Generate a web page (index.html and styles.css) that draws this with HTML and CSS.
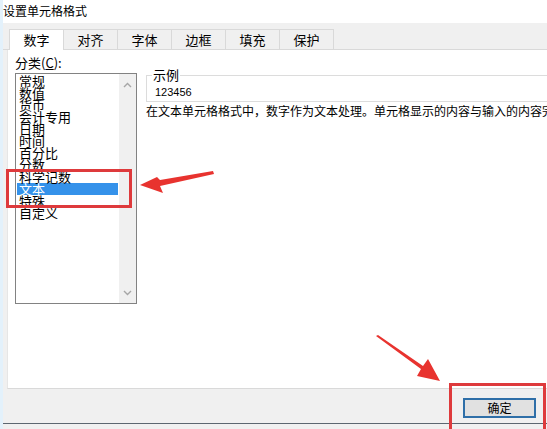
FILE: index.html
```html
<!DOCTYPE html>
<html>
<head>
    <title>设置单元格格式</title>
    <meta charset="utf-8">
    <link rel="stylesheet" href="styles.css">
</head>
<body>
    <div class="window">
        <div class="titlebar">设置单元格格式</div>

        <!-- tab strip -->
        <div class="tabstrip">
            <div class="tab active">数字</div>
            <div class="tab">对齐</div>
            <div class="tab">字体</div>
            <div class="tab">边框</div>
            <div class="tab">填充</div>
            <div class="tab">保护</div>
        </div>

        <div class="panel">
            <div class="category">
                <div class="category-label">分类(<u>C</u>):</div>
                <div class="listbox">
                    <ul class="items">
                        <li>常规</li>
                        <li>数值</li>
                        <li>货币</li>
                        <li>会计专用</li>
                        <li>日期</li>
                        <li>时间</li>
                        <li>百分比</li>
                        <li>分数</li>
                        <li>科学记数</li>
                        <li class="selected">文本</li>
                        <li>特殊</li>
                        <li>自定义</li>
                    </ul>
                    <div class="scrollbar">
                        <svg width="9" height="6" viewBox="0 0 9 6"><path d="M1 5 L4.5 1.5 L8 5" fill="none" stroke="#a6a6a6" stroke-width="1.4"/></svg>
                        <svg width="9" height="6" viewBox="0 0 9 6"><path d="M1 1 L4.5 4.5 L8 1" fill="none" stroke="#a6a6a6" stroke-width="1.4"/></svg>
                    </div>
                </div>
            </div>

            <div class="detail">
                <fieldset class="sample">
                    <legend>示例</legend>
                    <div class="sample-value">123456</div>
                </fieldset>
                <p class="note">在文本单元格格式中，数字作为文本处理。单元格显示的内容与输入的内容完全一致。</p>
            </div>
        </div>

        <div class="footer">
            <button class="ok">确定</button>
        </div>
        <div class="taskline"></div>
    </div>

    <!-- red annotation marks -->
    <div class="mark mark-list"></div>
    <div class="mark mark-ok"></div>
    <svg class="arrows" width="547" height="429" viewBox="0 0 547 429">
        <polygon points="213,171 214,174 160,186 163,193 140,185 157,177 160,180" fill="#e8332f"/>
        <polygon points="376,336 378,335 423,366 428,359 440,381 417,376 421,369" fill="#e8332f"/>
    </svg>
</body>
</html>
```

FILE: styles.css
```css
body {
    margin: 0;
    width: 547px;
    height: 429px;
    overflow: hidden;
    position: relative;
    background-color: #ffffff;
    font-family: "Noto Sans CJK SC", "Liberation Sans", sans-serif;
    color: #000000;
}

/* dialog frame */
.window {
    height: 429px;
    border-left: 3px solid #e3f1fb;
    display: flex;
    flex-direction: column;
    background-color: #f0f0f0;
}

.titlebar {
    height: 23px;
    background-color: #ffffff;
    font-size: 12px;
    line-height: 22px;
    flex-shrink: 0;
}

/* tab strip */
.tabstrip {
    height: 26px;
    display: flex;
    align-items: flex-end;
    padding-left: 6px;
    border-bottom: 1px solid #d9d9d9;
    flex-shrink: 0;
}

.tab {
    width: 53px;
    height: 19px;
    border: 1px solid #d9d9d9;
    border-bottom: none;
    margin-left: -1px;
    font-size: 13px;
    line-height: 19px;
    text-align: center;
    background-color: #f0f0f0;
}

.tab.active {
    background-color: #ffffff;
    height: 20px;
    margin-bottom: -1px;
    margin-left: 0;
}

/* white content area */
.panel {
    height: 339px;
    margin-left: 4px;
    background-color: #ffffff;
    border-left: 1px solid #e6e6e6;
    border-bottom: 1px solid #d9d9d9;
    display: flex;
    gap: 9px;
    padding: 6px 0 0 7px;
    box-sizing: border-box;
    flex-shrink: 0;
}

.category-label {
    font-size: 13px;
    line-height: 14px;
    height: 17px;
}

.listbox {
    width: 122px;
    height: 231px;
    border: 1px solid #828282;
    box-sizing: border-box;
    display: flex;
}

.items {
    list-style: none;
    margin: 0;
    padding: 1px 0 0 1px;
    flex: 1;
}

.items li {
    font-size: 13px;
    line-height: 12px;
    height: 12px;
    padding-left: 2px;
    white-space: nowrap;
}

.items li.selected {
    background-color: #3592ea;
    color: #ffffff;
    margin-right: 1px;
}

.scrollbar {
    width: 17px;
    background-color: #f0f0f0;
    display: flex;
    flex-direction: column;
    justify-content: space-between;
    align-items: center;
    padding: 8px 0 7px;
    box-sizing: border-box;
}

/* right column */
.detail {
    width: 420px;
    flex-shrink: 0;
    padding-top: 12px;
}

.sample {
    margin: 0;
    height: 34px;
    border: 1px solid #dcdcdc;
    padding: 0 0 0 8px;
    box-sizing: border-box;
}

.sample legend {
    font-size: 13px;
    line-height: 14px;
    padding: 0 1px;
    margin-left: -3px;
}

.sample-value {
    font-family: "Liberation Sans", sans-serif;
    font-size: 11px;
    line-height: 12px;
    margin-top: 4px;
}

.note {
    margin: 2px 0 0;
    font-size: 12px;
    line-height: 14px;
    white-space: nowrap;
}

/* bottom bar */
.footer {
    height: 34px;
    display: flex;
    justify-content: flex-end;
    align-items: center;
    padding-right: 11px;
    flex-shrink: 0;
}

.ok {
    width: 73px;
    height: 20px;
    border: 2px solid #2f6fa8;
    background-color: #e1e1e1;
    font-family: "Noto Sans CJK SC", sans-serif;
    font-size: 12px;
    line-height: 14px;
    padding: 0;
    margin-top: 4px;
}

.taskline {
    height: 1px;
    background-color: #5c6670;
    flex-shrink: 0;
}

/* annotation overlays */
.mark {
    position: absolute;
    border: 3px solid #de3a3c;
    box-sizing: border-box;
}

.mark-list {
    left: 6px;
    top: 169px;
    width: 126px;
    height: 39px;
}

.mark-ok {
    left: 449px;
    top: 383px;
    width: 97px;
    height: 50px;
}

.arrows {
    position: absolute;
    left: 0;
    top: 0;
}
```
